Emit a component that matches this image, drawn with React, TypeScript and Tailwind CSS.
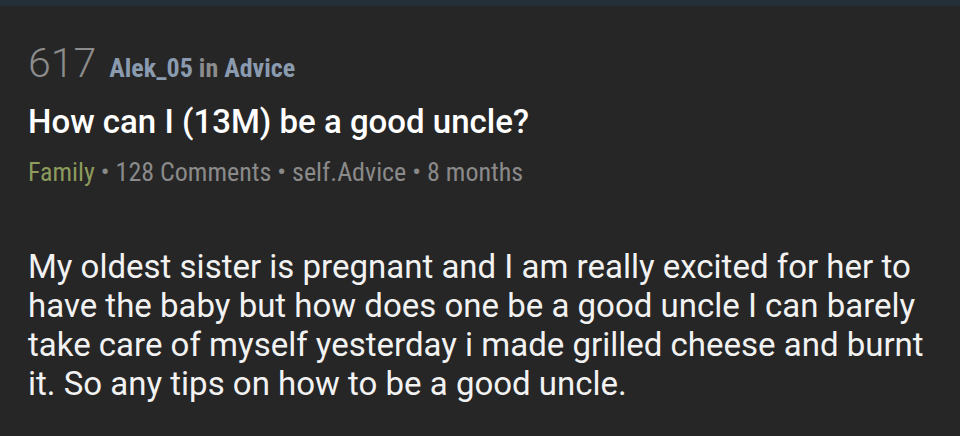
export default function App() {
  return (
    <div className="flex h-[436px] w-[960px] flex-col overflow-hidden bg-[#262626] font-['Roboto',sans-serif]">
      {/* top app bar edge */}
      <div className="h-[6px] w-full bg-[#252f37]" />

      <div className="flex flex-col px-[28px]">
        {/* score + author line */}
        <div className="mt-[37px] flex items-baseline gap-[13px] leading-none">
          <span className="text-[41px] font-light text-[#8c8c8c]">617</span>
          <span className="font-stretch-condensed text-[26px] font-bold text-[#8a9bb0]">
            Alek_05 <span className="text-[#8c8c8c]">in</span> Advice
          </span>
        </div>

        {/* title */}
        <h1 className="mt-[21px] text-[33px] font-medium leading-none text-white">
          How can I (13M) be a good uncle?
        </h1>

        {/* meta */}
        <div className="font-stretch-condensed mt-[21px] text-[26px] leading-none text-[#8a8a8a]">
          <span className="text-[#8d9b5c]">Family</span> • 128 Comments • self.Advice • 8 months
        </div>

        {/* body */}
        <p className="mt-[62px] max-w-[904px] text-[33px] leading-[39px] text-[#f2f2f2]">
          My oldest sister is pregnant and I am really excited for her to have the baby but how does one be a good uncle I can barely take care of myself yesterday i made grilled cheese and burnt it. So any tips on how to be a good uncle.
        </p>
      </div>
    </div>
  );
}
